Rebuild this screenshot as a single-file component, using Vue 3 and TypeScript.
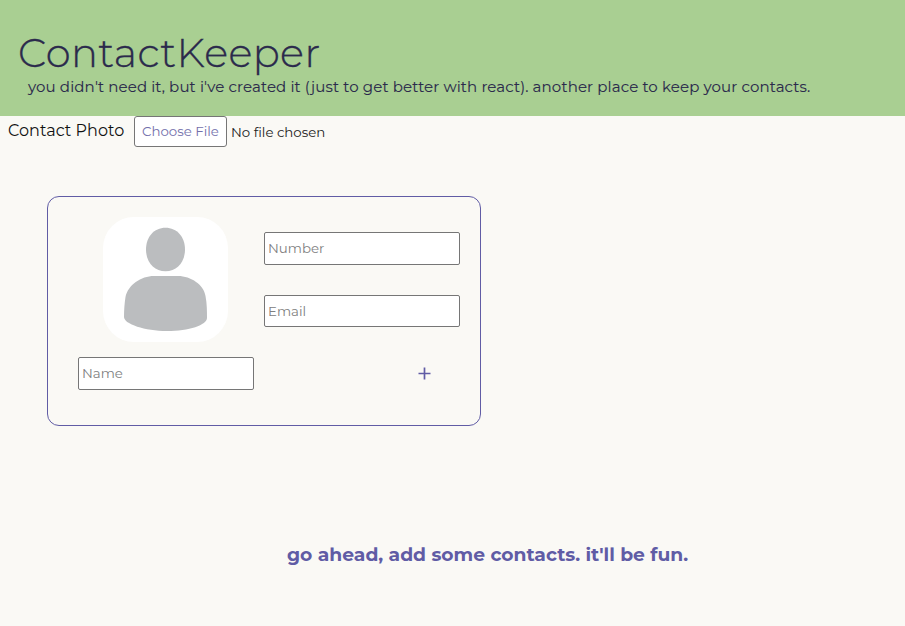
<script setup lang="ts">
import { ref } from 'vue'

const name = ref<string>('')
const number = ref<string>('')
const email = ref<string>('')
</script>

<template>
  <div class="page">
    <header class="banner">
      <h1>ContactKeeper</h1>
      <p>you didn't need it, but i've created it (just to get better with react). another place to keep your contacts.</p>
    </header>
    <div class="photo-row">
      <label class="photo-label">Contact Photo</label>
      <button class="choose" type="button">Choose File</button>
      <span class="status">No file chosen</span>
    </div>
    <form class="card" @submit.prevent>
      <div class="left">
        <svg class="avatar" viewBox="0 0 125 125" aria-hidden="true">
          <rect width="125" height="125" rx="31" fill="#fff" />
          <path d="M62.500 10.800C74 10.800 82 20 82 32.500S74 54.300 62.500 54.300S43 45 43 32.500S51 10.800 62.500 10.800Z" />
          <path d="M51 59H75C88 59 101 68 102.500 79C104 87 104 94 104 101C104 108 86 114 64 114C42 114 21 107 21 100C21 93 21.500 86 22.500 80C25 68 38 59 51 59Z" />
        </svg>
        <input v-model="name" class="field name" type="text" placeholder="Name" />
      </div>
      <div class="right">
        <input v-model="number" class="field number" type="text" placeholder="Number" />
        <input v-model="email" class="field email" type="text" placeholder="Email" />
        <button class="add" type="button" aria-label="Add contact">
          <svg viewBox="0 0 13 13"><path d="M6.500 .5V12.500M.5 6.500H12.500" /></svg>
        </button>
      </div>
    </form>
    <h3 class="empty">go ahead, add some contacts. it'll be fun.</h3>
  </div>
</template>

<style>
body {
  background: #faf9f5;
}
</style>

<style scoped>
.page {
  height: 626px;
  overflow: hidden;
  background: #faf9f5;
  font-family: Montserrat, Inter, sans-serif;
  color: #2b2a4c;
}
.banner {
  box-sizing: border-box;
  height: 116px;
  padding: 28px 0 0 18px;
  background: #a9cf92;
}
h1 {
  margin: 0;
  font-size: 40px;
  font-weight: 300;
  line-height: 49px;
  letter-spacing: 0.4px;
  -webkit-text-stroke: 0.3px #2b2a4c;
  white-space: nowrap;
}
p {
  margin: 1px 0 0 10px;
  font-size: 15px;
  font-weight: 400;
  line-height: 18px;
  letter-spacing: 0.13px;
  -webkit-text-stroke: 0.1px #2b2a4c;
  white-space: nowrap;
}
.photo-row {
  display: flex;
  height: 31px;
  padding-left: 8px;
}
.photo-label {
  width: 126px;
  color: #111;
  font-size: 16px;
  font-weight: 400;
  line-height: 29px;
  letter-spacing: 0.04px;
  white-space: nowrap;
}
.choose {
  box-sizing: border-box;
  width: 93px;
  height: 31px;
  padding: 0;
  border: 1px solid #767676;
  border-radius: 3px;
  background: #fff;
  color: #736fab;
  font-family: inherit;
  font-size: 13.333px;
  font-weight: 400;
  line-height: 27px;
  white-space: nowrap;
}
.status {
  margin-left: 4px;
  color: #222;
  font-size: 13.333px;
  line-height: 32px;
  white-space: nowrap;
}
.card {
  box-sizing: border-box;
  display: flex;
  width: 434px;
  height: 230px;
  margin: 49px 0 0 47px;
  padding-left: 30px;
  border: 1px solid #605ca5;
  border-radius: 12px;
}
.left {
  display: flex;
  flex-direction: column;
  width: 176px;
  padding-top: 20px;
}
.avatar {
  width: 125px;
  height: 125px;
  margin-left: 25px;
  fill: #bbbdbf;
}
.field {
  box-sizing: border-box;
  width: 196px;
  height: 33px;
  margin: 0;
  padding: 0 3px 1px;
  border: 1px solid #767676;
  border-radius: 2px;
  outline: none;
  background: #fff;
  color: #2b2a4c;
  font-family: inherit;
  font-size: 13.333px;
  font-weight: 400;
}
.field::placeholder {
  color: #808080;
  opacity: 1;
}
.name {
  width: 176px;
  margin-top: 15px;
}
.right {
  display: flex;
  flex-direction: column;
  margin-left: 10px;
  padding-top: 35px;
}
.email {
  height: 32px;
  margin-top: 30px;
  padding-bottom: 0;
}
.add {
  width: 13px;
  height: 13px;
  margin: 40px 0 0 154px;
  padding: 0;
  border: 0;
  background: none;
}
.add svg {
  display: block;
  width: 13px;
  height: 13px;
  fill: none;
  stroke: #605ca5;
  stroke-width: 1.7;
}
.empty {
  margin: 117px 0 0 287px;
  color: #605ca5;
  font-size: 18.720px;
  font-weight: 700;
  line-height: 23px;
  letter-spacing: 0.01px;
  white-space: nowrap;
}
</style>
